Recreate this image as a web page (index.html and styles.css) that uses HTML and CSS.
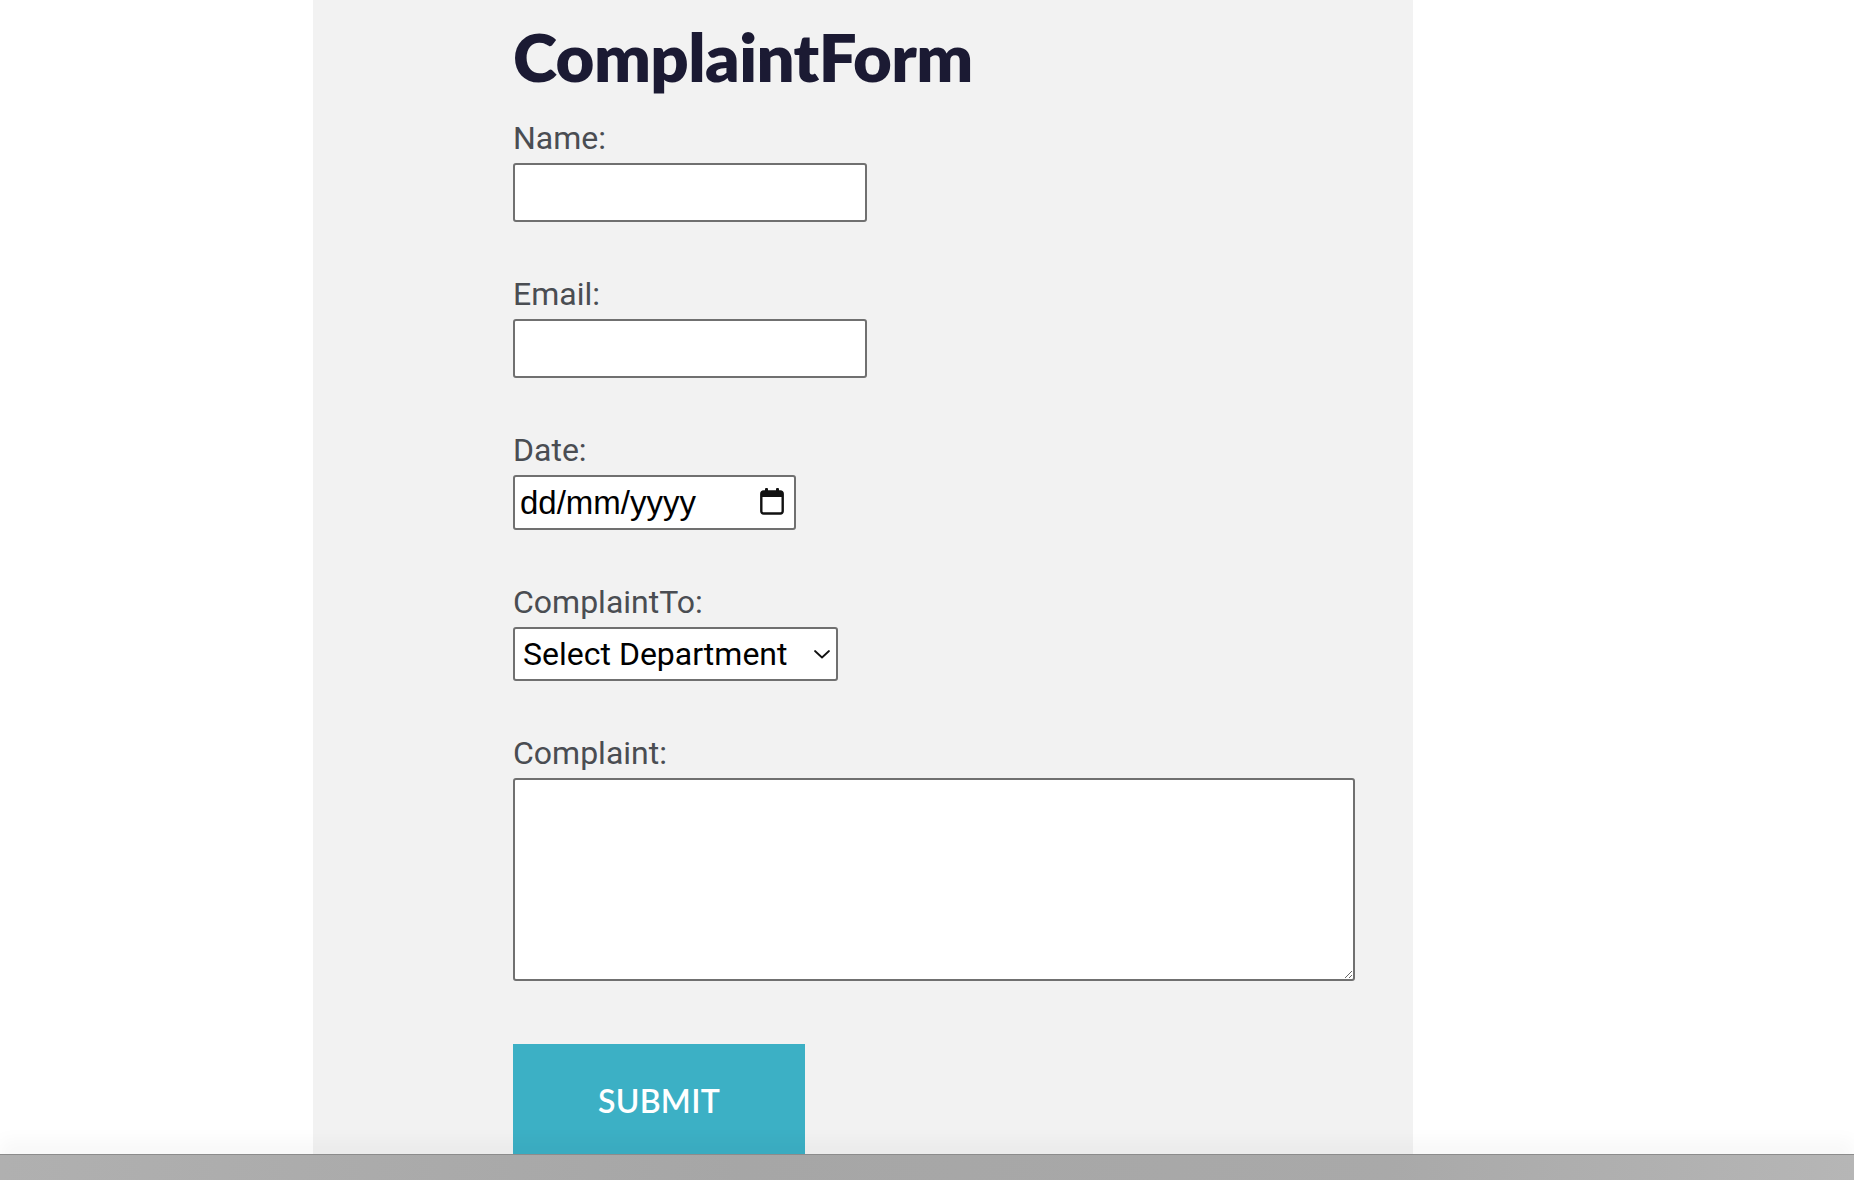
FILE: index.html
```html
<!DOCTYPE html>
<html lang="en">
<head>
<meta charset="utf-8">
<title>Complaint Form</title>
<link rel="stylesheet" href="styles.css">
</head>
<body>
<main class="panel">
  <h1 class="title">ComplaintForm</h1>
  <form class="form">
    <div class="group">
      <label class="label" for="name">Name:</label>
      <input class="field" id="name" type="text">
    </div>
    <div class="group">
      <label class="label" for="email">Email:</label>
      <input class="field" id="email" type="email">
    </div>
    <div class="group">
      <label class="label" for="date">Date:</label>
      <div class="date-field" id="date">
        <span class="date-text">dd/mm/yyyy</span>
        <svg class="cal-icon" width="24" height="27" viewBox="0 0 24 27" aria-hidden="true">
          <rect x="5" y="0" width="3" height="5" rx="1" fill="#111"/>
          <rect x="16" y="0" width="3" height="5" rx="1" fill="#111"/>
          <path d="M3.5 3.5h17a2.2 2.2 0 0 1 2.2 2.2v17.6a2.2 2.2 0 0 1-2.2 2.2h-17a2.2 2.2 0 0 1-2.2-2.2V5.7a2.2 2.2 0 0 1 2.2-2.2z" fill="none" stroke="#111" stroke-width="2.4"/>
          <rect x="1.5" y="3.5" width="21" height="5.5" fill="#111"/>
        </svg>
      </div>
    </div>
    <div class="group">
      <label class="label" for="dept">ComplaintTo:</label>
      <div class="select-wrap">
        <select class="select" id="dept">
          <option>Select Department</option>
        </select>
        <svg class="chevron" width="18" height="10" viewBox="0 0 18 10" aria-hidden="true">
          <path d="M2 2l7 6.5 7-6.5" fill="none" stroke="#111" stroke-width="1.8" stroke-linecap="round" stroke-linejoin="round"/>
        </svg>
      </div>
    </div>
    <div class="group">
      <label class="label" for="complaint">Complaint:</label>
      <textarea class="area" id="complaint"></textarea>
    </div>
    <button class="submit" type="button">SUBMIT</button>
  </form>
</main>
<div class="bottom-bar"></div>
</body>
</html>
```

FILE: styles.css
```css
html, body {
  margin: 0;
  padding: 0;
  background: #ffffff;
  height: 100%;
  overflow: hidden;
}

.panel {
  margin-left: 313px;
  width: 1100px;
  min-height: 1180px;
  box-sizing: border-box;
  background: #f2f2f2;
  padding: 22px 0 0 200px;
}

.title {
  margin: 0 0 30px 0;
  font-family: "Lato", sans-serif;
  font-weight: 800;
  font-size: 67px;
  line-height: 68px;
  letter-spacing: -0.6px;
  color: #1b1a33;
}

.form {
  display: flex;
  flex-direction: column;
  align-items: flex-start;
}

.group {
  display: flex;
  flex-direction: column;
  align-items: flex-start;
  margin-bottom: 54px;
}

.label {
  font-family: "Roboto", sans-serif;
  font-size: 32px;
  line-height: 36px;
  color: #4a4d52;
  margin-bottom: 7px;
}

.field {
  box-sizing: border-box;
  width: 354px;
  height: 59px;
  border: 2px solid #707070;
  border-radius: 3px;
  background: #ffffff;
  margin: 0;
  padding: 0 10px;
  font-family: "Roboto", sans-serif;
  font-size: 30px;
}

.date-field {
  box-sizing: border-box;
  width: 283px;
  height: 55px;
  border: 2px solid #707070;
  border-radius: 3px;
  background: #ffffff;
  display: flex;
  align-items: center;
  justify-content: space-between;
  padding: 0 10px 0 5px;
}

.date-text {
  font-family: "Liberation Sans", Arial, sans-serif;
  font-size: 33px;
  color: #000000;
}

.cal-icon {
  display: block;
  margin-top: -2px;
}

.select-wrap {
  position: relative;
}

.select {
  -webkit-appearance: none;
  appearance: none;
  box-sizing: border-box;
  width: 325px;
  height: 54px;
  border: 2px solid #707070;
  border-radius: 3px;
  background: #ffffff;
  margin: 0;
  padding: 0 0 0 8px;
  font-family: "Roboto", sans-serif;
  font-size: 32px;
  color: #000000;
  outline: none;
}

.chevron {
  position: absolute;
  right: 7px;
  top: 22px;
}

.area {
  box-sizing: border-box;
  width: 842px;
  height: 203px;
  border: 2px solid #707070;
  border-radius: 3px;
  background: #ffffff;
  margin: 0;
  padding: 4px;
  font-family: "Roboto", sans-serif;
  font-size: 24px;
  resize: both;
}

.group:last-of-type {
  margin-bottom: 63px;
}

.submit {
  width: 292px;
  height: 113px;
  border: none;
  background: #3cb0c5;
  color: #ffffff;
  font-family: "Lato", sans-serif;
  font-weight: 600;
  font-size: 32px;
  letter-spacing: 0.3px;
  padding: 0;
  margin: 0;
  cursor: pointer;
}

.bottom-bar {
  position: fixed;
  left: 0;
  right: 0;
  bottom: 0;
  height: 25px;
  border-top: 1px solid #8c8c8c;
  background: linear-gradient(90deg, #b0b0b0 0%, #a6a6a6 40%, #a9a9a9 75%, #b6b6b6 100%);
  box-shadow: 0 -14px 18px rgba(0, 0, 0, 0.03);
}
```
